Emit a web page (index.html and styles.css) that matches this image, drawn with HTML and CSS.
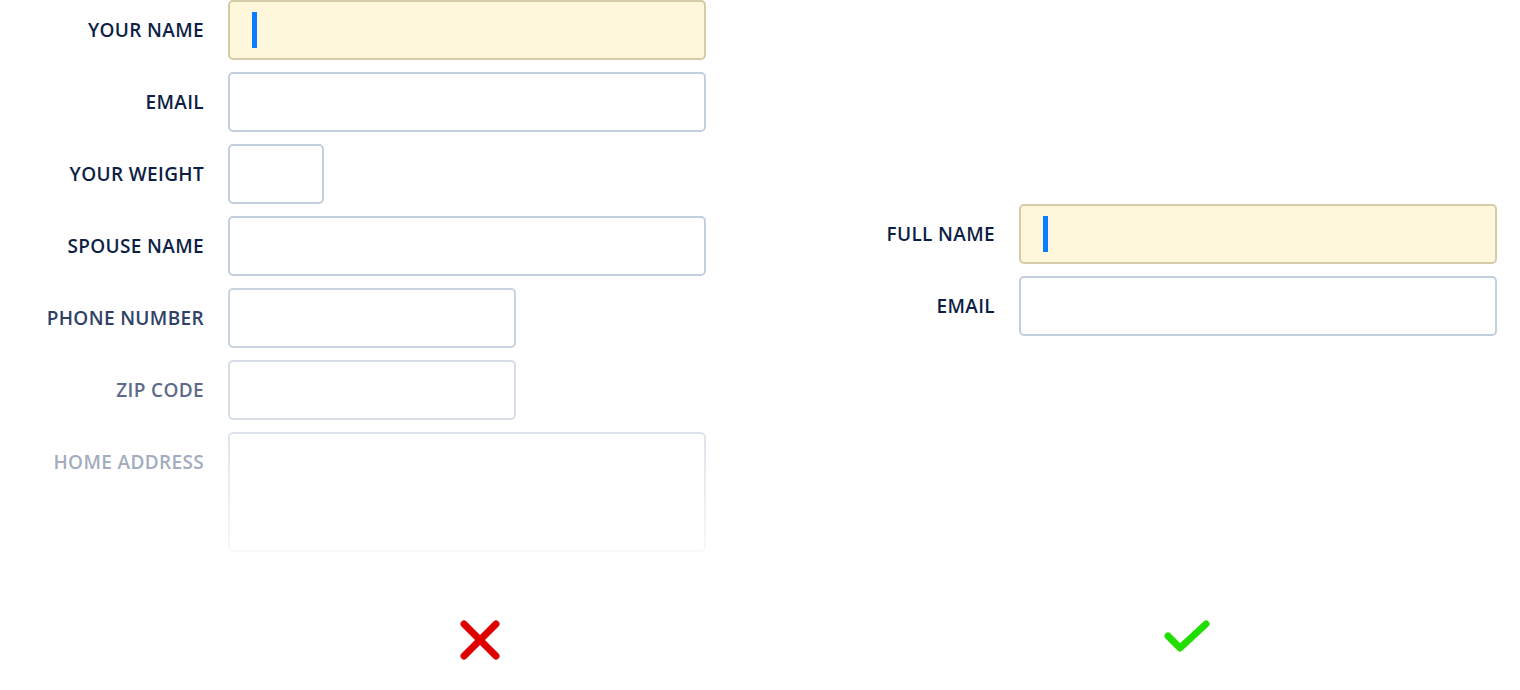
FILE: index.html
```html
<!DOCTYPE html>
<html lang="en">
<head>
  <meta charset="UTF-8" />
  <meta name="viewport" content="width=device-width, initial-scale=1.0" />
  <title>Form field order</title>
  <link rel="stylesheet" href="styles.css">
</head>
<body>
  <main class="compare">
    <form class="form form-bad">
      <div class="row">
        <label for="name">YOUR NAME</label>
        <div class="field focused"><span class="caret"></span></div>
      </div>
      <div class="row">
        <label for="email">EMAIL</label>
        <input id="email" type="text" />
      </div>
      <div class="row">
        <label for="weight">YOUR WEIGHT</label>
        <input id="weight" class="tiny" type="text" />
      </div>
      <div class="row">
        <label for="spouse">SPOUSE NAME</label>
        <input id="spouse" type="text" />
      </div>
      <div class="row fade-1">
        <label for="phone">PHONE NUMBER</label>
        <input id="phone" class="short" type="text" />
      </div>
      <div class="row fade-2">
        <label for="zip">ZIP CODE</label>
        <input id="zip" class="short" type="text" />
      </div>
      <div class="row fade-3">
        <label for="address">HOME ADDRESS</label>
        <textarea id="address"></textarea>
      </div>
    </form>

    <form class="form form-good">
      <div class="row">
        <label for="fullname">FULL NAME</label>
        <div class="field focused"><span class="caret"></span></div>
      </div>
      <div class="row">
        <label for="email2">EMAIL</label>
        <input id="email2" type="text" />
      </div>
    </form>

    <div class="verdict verdict-bad">
      <svg width="40" height="40" viewBox="0 0 40 40">
        <path d="M4 4 L36 36 M36 4 L4 36" stroke="#e00000" stroke-width="7" stroke-linecap="round" fill="none" />
      </svg>
    </div>
    <div class="verdict verdict-good">
      <svg width="46" height="36" viewBox="0 0 46 36">
        <path d="M4 16 L16 28 L42 4" stroke="#22dd00" stroke-width="7" stroke-linecap="round" stroke-linejoin="round" fill="none" />
      </svg>
    </div>
  </main>
</body>
</html>
```

FILE: styles.css
```css
body {
  margin: 0;
  padding: 0;
  background: #fff;
  font-family: 'Open Sans', sans-serif;
  color: #0d1f45;
}

.compare {
  display: grid;
  grid-template-columns: 706px 706px;
  grid-template-rows: 600px auto;
  column-gap: 85px;
}

.form {
  display: flex;
  flex-direction: column;
  gap: 12px;
}

.form-good {
  padding-top: 204px;
}

.row {
  display: flex;
  align-items: flex-start;
  gap: 24px;
}

label {
  width: 204px;
  flex-shrink: 0;
  height: 60px;
  line-height: 60px;
  text-align: right;
  font-size: 19px;
  font-weight: 600;
  letter-spacing: 0.35px;
}

input, textarea, .field {
  box-sizing: border-box;
  width: 478px;
  height: 60px;
  margin: 0;
  padding: 0 22px;
  border: 2px solid #c3cfdd;
  border-radius: 5px;
  background: #fff;
  outline: none;
  font: inherit;
}

.field.focused {
  display: flex;
  align-items: center;
  background: #fff7db;
  border-color: #d6cba8;
}

.caret {
  width: 5px;
  height: 36px;
  background: #0a7cff;
}

input.tiny {
  width: 96px;
}

input.short {
  width: 288px;
}

textarea {
  height: 120px;
  resize: none;
  -webkit-mask-image: linear-gradient(to bottom, #000 0%, rgba(0, 0, 0, 0.25) 100%);
  mask-image: linear-gradient(to bottom, #000 0%, rgba(0, 0, 0, 0.25) 100%);
}

.fade-1 label {
  color: #2f4266;
}

.fade-1 input {
  border-color: #c9d3e0;
}

.fade-2 label {
  color: #5d6b89;
}

.fade-2 input {
  border-color: #d6dde7;
}

.fade-3 label {
  color: #a3adbe;
}

.fade-3 textarea {
  border-color: #dde3ec;
}

.verdict {
  padding-top: 20px;
}

.verdict-bad {
  padding-left: 460px;
}

.verdict-good {
  padding-left: 373px;
}
```
